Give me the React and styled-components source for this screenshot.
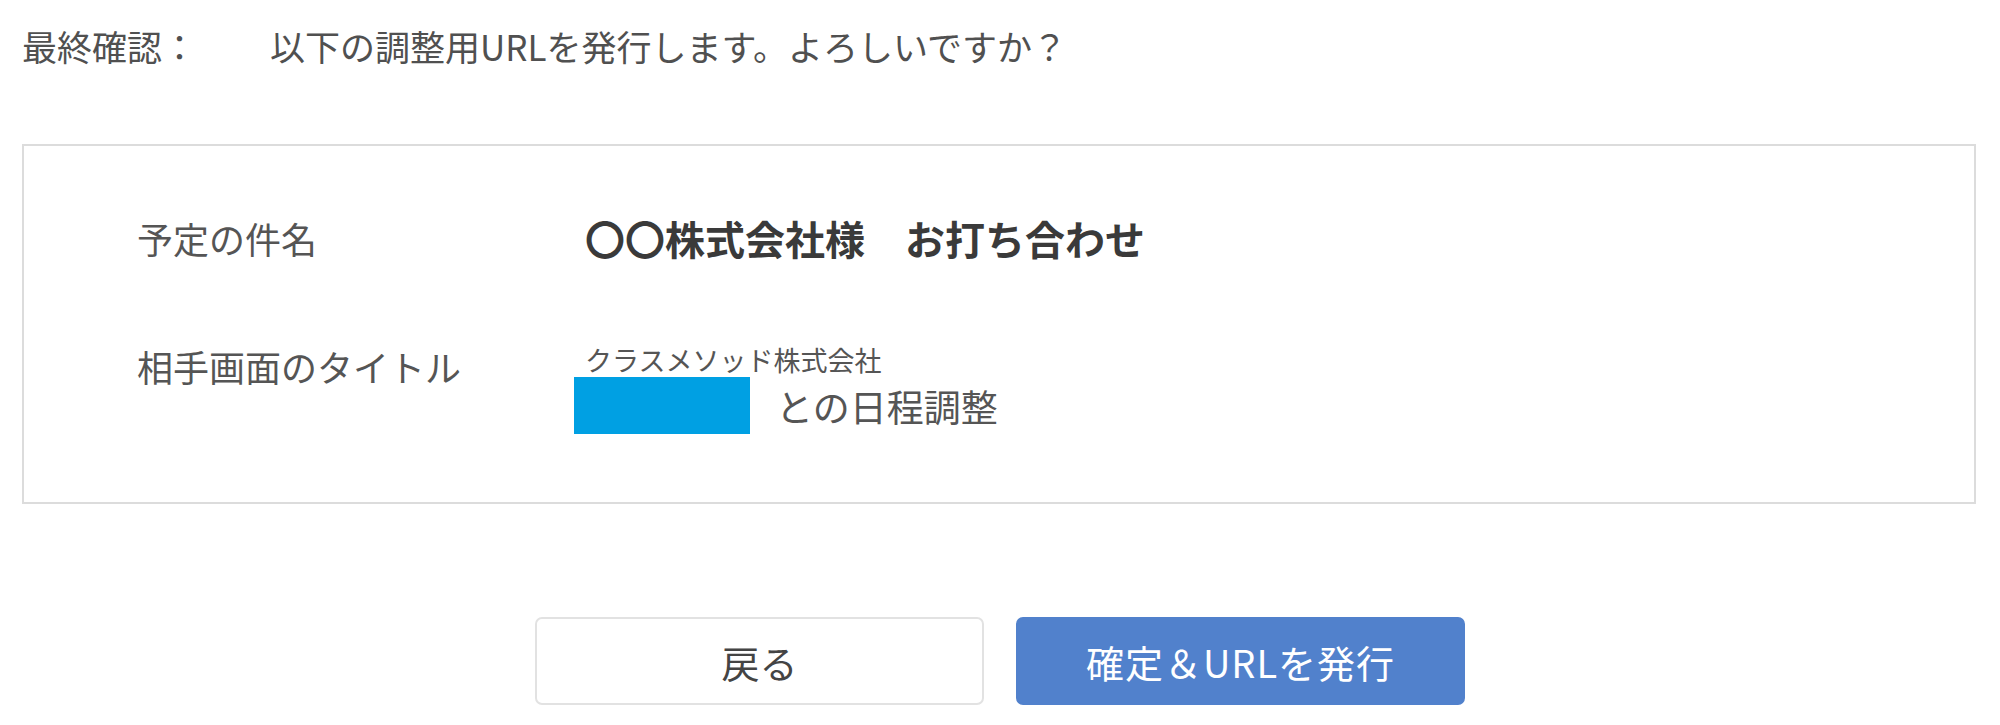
import React from 'react'
import styled, { createGlobalStyle } from 'styled-components'

const GlobalStyle = createGlobalStyle`
  html, body {
    margin: 0;
    padding: 0;
    background: #fff;
  }
  body {
    font-family: "Noto Sans CJK JP", "Noto Sans", sans-serif;
    color: #555;
  }
`

const Page = styled.div`
  width: 2000px;
  padding: 26px 24px 0 22px;
  box-sizing: border-box;
`

const Header = styled.div`
  display: flex;
  align-items: center;
  font-size: 35px;
  line-height: 40px;
  color: #505050;
`

const HeaderLabel = styled.span`
  width: 248px;
  flex-shrink: 0;
`

const SummaryBox = styled.div`
  margin-top: 78px;
  border: 2px solid #dcdcdc;
  height: 360px;
  box-sizing: border-box;
  padding: 72px 0 0 113px;
  display: grid;
  grid-template-columns: 448px 1fr;
  row-gap: 88px;
  align-content: start;
`

const Label = styled.div`
  font-size: 36px;
  line-height: 40px;
  color: #555;
`

const Value = styled.div`
  font-size: ${({ size }) => size || 36}px;
  line-height: 40px;
  font-weight: ${({ bold }) => (bold ? 700 : 400)};
  color: ${({ bold }) => (bold ? '#3a3a3a' : '#555')};
`

const TitleBlock = styled.div`
  display: flex;
  flex-direction: column;
`

const Company = styled.div`
  font-size: 27px;
  line-height: 28px;
  color: #555;
`

const TitleRow = styled.div`
  display: flex;
  align-items: center;
  gap: 26px;
  margin: 3px 0 0 -11px;
`

const NameSwatch = styled.div`
  width: 176px;
  height: 57px;
  background: #00a0e3;
`

const TitleSuffix = styled.span`
  font-size: 37px;
  line-height: 40px;
  color: #555;
  margin-top: 1px;
`

const Actions = styled.div`
  display: flex;
  justify-content: center;
  gap: 32px;
  margin-top: 113px;
  padding-left: 2px;
`

const Button = styled.button`
  width: 449px;
  height: 88px;
  border-radius: 7px;
  font-family: inherit;
  font-size: 38px;
  letter-spacing: ${({ primary }) => (primary ? '1px' : '0')};
  cursor: pointer;
  border: 2px solid ${({ primary }) => (primary ? '#5181cc' : '#e2e2e2')};
  background: ${({ primary }) => (primary ? '#5181cc' : '#fff')};
  color: ${({ primary }) => (primary ? '#fff' : '#444')};
`

export default function App() {
  return (
    <>
      <GlobalStyle />
      <Page>
        <Header>
          <HeaderLabel>最終確認：</HeaderLabel>
          <span>以下の調整用URLを発行します。よろしいですか？</span>
        </Header>

        <SummaryBox>
          <Label>予定の件名</Label>
          <Value bold size={40}>〇〇株式会社様　お打ち合わせ</Value>

          <Label>相手画面のタイトル</Label>
          <TitleBlock>
            <Company>クラスメソッド株式会社</Company>
            <TitleRow>
              <NameSwatch />
              <TitleSuffix>との日程調整</TitleSuffix>
            </TitleRow>
          </TitleBlock>
        </SummaryBox>

        <Actions>
          <Button>戻る</Button>
          <Button primary>確定＆URLを発行</Button>
        </Actions>
      </Page>
    </>
  )
}
